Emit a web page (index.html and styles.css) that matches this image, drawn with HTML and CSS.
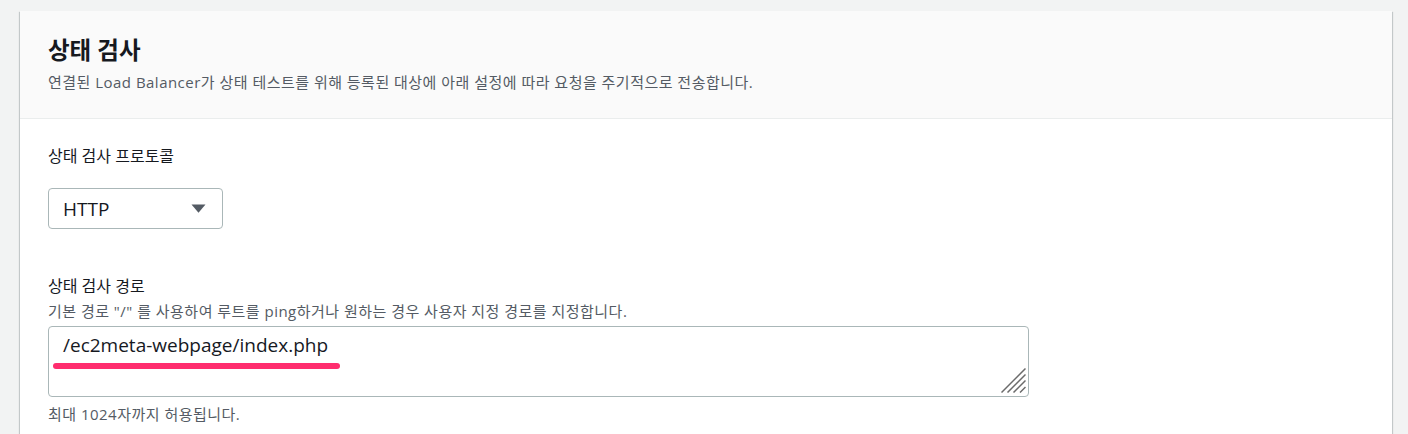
FILE: index.html
```html
<!DOCTYPE html>
<html lang="ko">
<head>
<meta charset="utf-8">
<link rel="stylesheet" href="styles.css">
</head>
<body>
<div class="page">
  <section class="card">
    <header class="card-head">
      <h2 class="title">상태 검사</h2>
      <p class="subtitle">연결된 Load Balancer가 상태 테스트를 위해 등록된 대상에 아래 설정에 따라 요청을 주기적으로 전송합니다.</p>
    </header>
    <div class="card-body">
      <div class="field">
        <label class="label">상태 검사 프로토콜</label>
        <div class="select">
          <span>HTTP</span>
          <svg class="caret" width="15" height="9" viewBox="0 0 15 9"><path d="M0.5 0.5h14L7.5 8.8z" fill="#545b64"/></svg>
        </div>
      </div>
      <div class="field path">
        <label class="label">상태 검사 경로</label>
        <p class="desc">기본 경로 "/" 를 사용하여 루트를 ping하거나 원하는 경우 사용자 지정 경로를 지정합니다.</p>
        <div class="textarea">
          <span class="value">/ec2meta-webpage/index.php</span>
          <span class="mark"></span>
          <svg class="grip" width="25" height="25" viewBox="0 0 25 25"><path d="M24.5 0.5L0.5 24.5M24.5 6.5L6.5 24.5M24.5 12.5L12.5 24.5M24.5 19L19 24.5" stroke="#6b6b6b" stroke-width="1.5"/></svg>
        </div>
        <p class="hint">최대 1024자까지 허용됩니다.</p>
      </div>
    </div>
  </section>
</div>
</body>
</html>
```
FILE: styles.css
```css
* { box-sizing: border-box; }
html, body { margin: 0; padding: 0; }
body {
  background: #f2f3f3;
  font-family: "Open Sans", "Noto Sans CJK KR", sans-serif;
  color: #16191f;
  width: 1408px;
  height: 434px;
  overflow: hidden;
}
.page { padding: 11px 16px 0 20px; }
.card {
  width: 1372px;
  background: #fff;
  box-shadow: 0 1px 1px 0 rgba(0,28,36,0.3), 1px 1px 1px 0 rgba(0,28,36,0.15), -1px 1px 1px 0 rgba(0,28,36,0.15);
  height: 440px;
}
.card-head {
  background: #fafafa;
  border-bottom: 1px solid #eaeded;
  padding: 24px 28px 0;
  height: 108px;
}
.title {
  margin: 0;
  font-size: 23.5px;
  font-weight: 700;
  line-height: 30px;
}
.subtitle {
  margin: 7px 0 0;
  font-size: 15px;
  letter-spacing: 0.48px;
  line-height: 20px;
  color: #545b64;
}
.card-body { padding: 25px 28px 0; }
.field { display: flex; flex-direction: column; align-items: flex-start; }
.label { font-size: 16px; line-height: 24px; color: #16191f; }
.select {
  margin-top: 20px;
  width: 175px;
  height: 41px;
  border: 1px solid #aab7b8;
  border-radius: 4px;
  display: flex;
  align-items: center;
  justify-content: space-between;
  padding: 0 16px 0 14px;
  font-size: 19px;
}
.path { margin-top: 45px; }
.desc { margin: 3px 0 0; font-size: 15px; letter-spacing: 0.48px; line-height: 20px; color: #545b64; }
.textarea {
  position: relative;
  margin-top: 5px;
  width: 981px;
  height: 71px;
  border: 1px solid #aab7b8;
  border-radius: 4px;
  padding: 4px 14px;
  font-size: 19px;
  line-height: 28px;
}
.mark {
  position: absolute;
  left: 4px;
  top: 36px;
  width: 287px;
  height: 6px;
  border-radius: 3px;
  background: #ff2d6e;
}
.grip { position: absolute; right: 2px; bottom: 3px; }
.hint { margin: 7px 0 0; font-size: 15px; letter-spacing: 0.48px; line-height: 20px; color: #545b64; }
```
